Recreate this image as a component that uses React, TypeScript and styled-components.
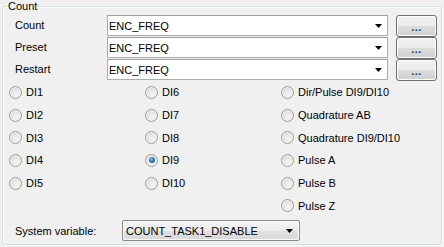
import React from 'react';
import styled, { createGlobalStyle } from 'styled-components';

const GlobalStyle = createGlobalStyle`
	html, body {
		margin: 0;
		padding: 0;
		background: #f0f0f0;
	}
	body {
		font-family: 'Liberation Sans', Arial, sans-serif;
		font-size: 11px;
		color: #000;
	}
`;

const sources = ['Count', 'Preset', 'Restart'];

const columns: string[][] = [
	['DI1', 'DI2', 'DI3', 'DI4', 'DI5'],
	['DI6', 'DI7', 'DI8', 'DI9', 'DI10'],
	['Dir/Pulse DI9/DI10', 'Quadrature AB', 'Quadrature DI9/DI10', 'Pulse A', 'Pulse B', 'Pulse Z'],
];

const Arrow: React.FC = () => (
	<svg width="7" height="4" viewBox="0 0 7 4">
		<path d="M0 0H7L3.5 4Z" fill="#000" />
	</svg>
);

const App: React.FC = () => {
	const selected = 'DI9';
	return (
		<>
			<GlobalStyle />
			<Page>
				<Group>
					<Legend>Count</Legend>
					<GroupBody>
						<SourceGrid>
							{sources.map((name) => (
								<React.Fragment key={name}>
									<FieldLabel>{name}</FieldLabel>
									<EditCombo>
										<ComboText>ENC_FREQ</ComboText>
										<Arrow />
									</EditCombo>
									<DotsButton>...</DotsButton>
								</React.Fragment>
							))}
						</SourceGrid>
						<RadioGrid>
							{columns.map((col, i) => (
								<RadioColumn key={i}>
									{col.map((label) => (
										<RadioRow key={label}>
											<RadioCircle $checked={label === selected} />
											<span>{label}</span>
										</RadioRow>
									))}
								</RadioColumn>
							))}
						</RadioGrid>
						<SystemRow>
							<SystemLabel>System variable:</SystemLabel>
							<DropCombo>
								<ComboText>COUNT_TASK1_DISABLE</ComboText>
								<Arrow />
							</DropCombo>
						</SystemRow>
					</GroupBody>
				</Group>
			</Page>
		</>
	);
};

const Page = styled.div`
	width: 444px;
	height: 247px;
	box-sizing: border-box;
	padding: 0 2px;
`;

const Group = styled.fieldset`
	margin: 0;
	padding: 0;
	width: 440px;
	box-sizing: border-box;
	border: 1px solid #d5dfe5;
	border-radius: 3px;
	box-shadow: inset 1px 1px 0 #fff, 1px 1px 0 #fff;
`;

const Legend = styled.legend`
	margin-left: 4px;
	padding: 0 1px;
	line-height: 12px;
	font-size: 11px;
`;

const GroupBody = styled.div`
	padding: 3px 0 3px 6px;
`;

const SourceGrid = styled.div`
	display: grid;
	grid-template-columns: 84px 281px 41px;
	grid-auto-rows: 22px;
	column-gap: 8px;
	padding-left: 6px;
	align-items: start;
`;

const FieldLabel = styled.div`
	height: 21px;
	line-height: 21px;
`;

const EditCombo = styled.div`
	height: 21px;
	box-sizing: border-box;
	border: 1px solid #abadb3;
	border-top-color: #9a9da4;
	background: #fff;
	display: flex;
	align-items: center;
	justify-content: space-between;
	padding: 0 5px 0 1px;
`;

const ComboText = styled.span`
	white-space: nowrap;
`;

const DotsButton = styled.div`
	height: 22px;
	box-sizing: border-box;
	border: 1px solid #707070;
	border-radius: 3px;
	box-shadow: inset 0 0 0 1px #fcfcfc;
	background: linear-gradient(#f2f2f2 0%, #ebebeb 50%, #dddddd 51%, #cfcfcf 100%);
	color: #1a3a6a;
	font-size: 11px;
	font-weight: bold;
	text-align: center;
	line-height: 20px;
	letter-spacing: 0.5px;
	padding-top: 1px;
`;

const RadioGrid = styled.div`
	display: flex;
`;

const RadioColumn = styled.div`
	width: 136px;
	display: flex;
	flex-direction: column;
`;

const RadioRow = styled.div`
	height: 22.7px;
	display: flex;
	align-items: center;
	gap: 4px;
	white-space: nowrap;
`;

const RadioCircle = styled.span<{ $checked: boolean }>`
	width: 13px;
	height: 13px;
	box-sizing: border-box;
	border-radius: 50%;
	border: 1px solid #9a9a9a;
	background: radial-gradient(circle at 60% 65%, #f6f6f6 0%, #e6e6e6 45%, #cdcdcd 100%);
	box-shadow: inset 0 0 0 1px #f4f4f4;
	display: flex;
	align-items: center;
	justify-content: center;
	flex-shrink: 0;

	&::after {
		content: '';
		display: ${(p) => (p.$checked ? 'block' : 'none')};
		width: 6px;
		height: 6px;
		border-radius: 50%;
		background: radial-gradient(circle at 40% 35%, #7ec4f0 0%, #2a7cc7 45%, #0d3f7a 100%);
	}
`;

const SystemRow = styled.div`
	display: flex;
	align-items: center;
	margin-top: 3px;
	padding-left: 6px;
`;

const SystemLabel = styled.div`
	width: 107px;
`;

const DropCombo = styled.div`
	width: 178px;
	height: 21px;
	box-sizing: border-box;
	border: 1px solid #8a8a8a;
	border-radius: 2px;
	box-shadow: inset 0 0 0 1px #fafafa;
	background: linear-gradient(#f4f4f4 0%, #ececec 50%, #e0e0e0 51%, #d9d9d9 100%);
	display: flex;
	align-items: center;
	justify-content: space-between;
	padding: 0 6px 0 3px;
`;

export default App;
